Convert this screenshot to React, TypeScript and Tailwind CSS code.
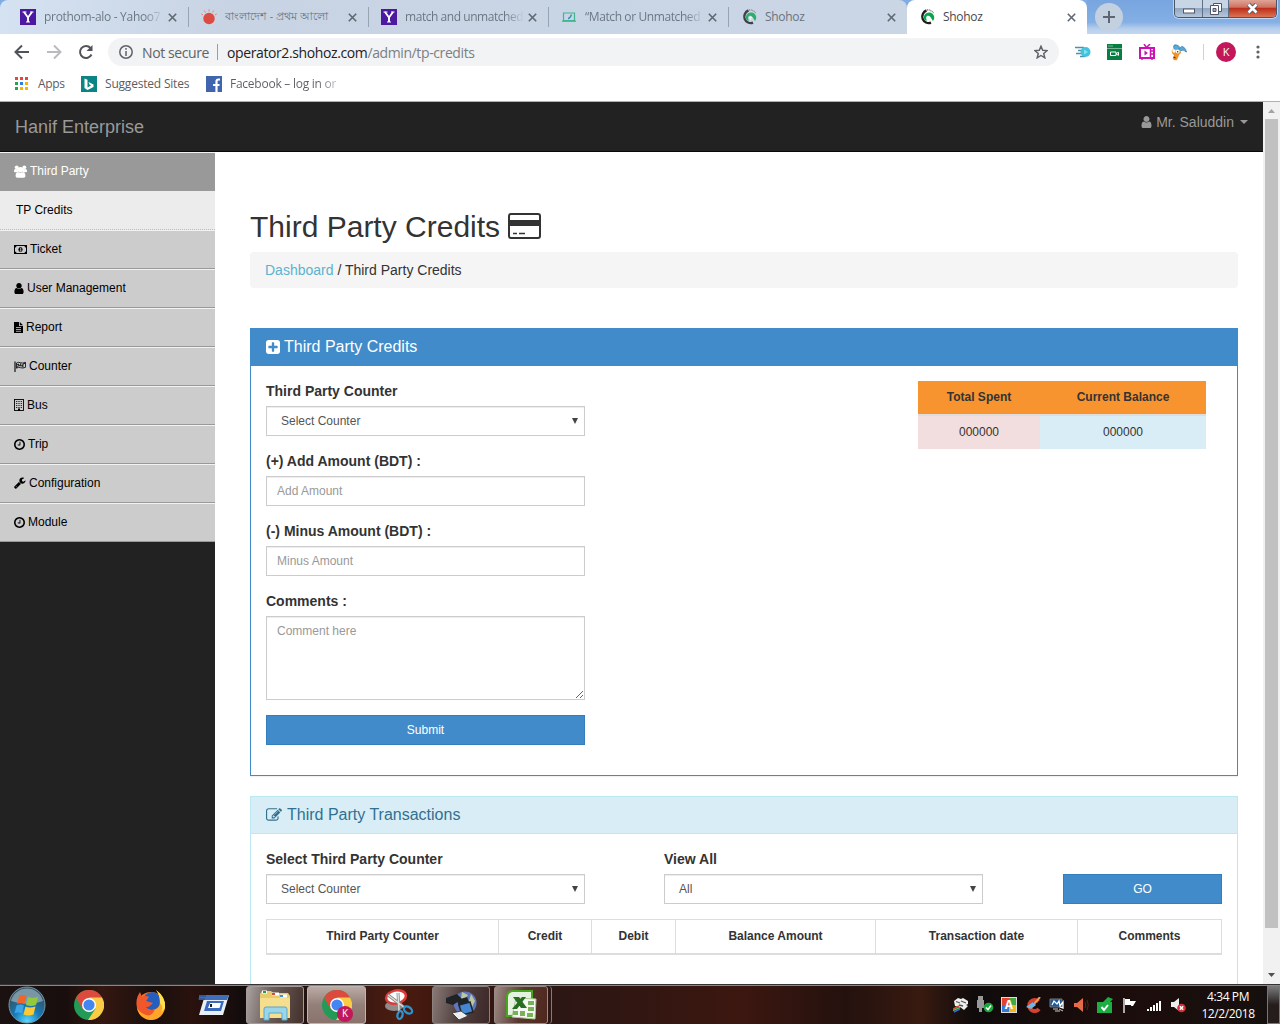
import React from "react";

const P = {
  user: "M1536 1399q0 109-62.5 187t-150.5 78h-854q-88 0-150.5-78t-62.5-187q0-85 8.5-160.5t31.5-152 58.5-131 94-89 134.5-34.5q131 128 313 128t313-128q76 0 134.5 34.5t94 89 58.5 131 31.5 152 8.5 160.5zm-256-887q0 159-112.5 271.5t-271.5 112.5-271.5-112.5-112.5-271.5 112.5-271.5 271.5-112.5 271.5 112.5 112.5 271.5z",
  plus: "M1408 960v-128q0-26-19-45t-45-19h-320v-320q0-26-19-45t-45-19h-128q-26 0-45 19t-19 45v320h-320q-26 0-45 19t-19 45v128q0 26 19 45t45 19h320v320q0 26 19 45t45 19h128q26 0 45-19t19-45v-320h320q26 0 45-19t19-45zm256-544v960q0 119-84.5 203.5t-203.5 84.5h-960q-119 0-203.5-84.5t-84.5-203.5v-960q0-119 84.5-203.5t203.5-84.5h960q119 0 203.5 84.5t84.5 203.5z",
  clock: "M1024 544v448q0 14-9 23t-23 9h-320q-14 0-23-9t-9-23v-64q0-14 9-23t23-9h224v-352q0-14 9-23t23-9h64q14 0 23 9t9 23zm416 352q0-148-73-273t-198-198-273-73-273 73-198 198-73 273 73 273 198 198 273 73 273-73 198-198 73-273zm224 0q0 209-103 385.5t-279.5 279.5-385.5 103-385.5-103-279.5-279.5-103-385.5 103-385.5 279.5-279.5 385.5-103 385.5 103 279.5 279.5 103 385.5z",
  wrench: "M448 1472q0-26-19-45t-45-19-45 19-19 45 19 45 45 19 45-19 19-45zm644-420l-682 682q-37 37-90 37-52 0-91-37l-106-108q-38-36-38-90 0-53 38-91l681-681q39 98 114.5 173.5t173.5 114.5zm634-435q0 39-23 106-47 134-164.5 217.5t-258.5 83.5q-185 0-316.5-131.5t-131.5-316.5 131.5-316.5 316.5-131.5q58 0 121.5 16.5t107.5 46.5q16 11 16 28t-16 28l-293 169v224l193 107q5-3 79-48.5t135.5-81 70.5-35.5q15 0 23.5 10t8.5 25z",
  edit: "M888 1184l116-116-152-152-116 116v56h96v96h56zm440-720q-16-16-33 1l-350 350q-17 17-1 33t33-1l350-350q17-17 1-33zm80 594v190q0 119-84.5 203.5t-203.5 84.5h-832q-119 0-203.5-84.5t-84.5-203.5v-832q0-119 84.5-203.5t203.5-84.5h832q63 0 117 25 15 7 18 23 3 17-9 29l-49 49q-14 14-32 8-23-6-45-6h-832q-66 0-113 47t-47 113v832q0 66 47 113t113 47h832q66 0 113-47t47-113v-126q0-13 9-22l64-64q15-15 35-7t20 29zm-96-738l288 288-672 672h-288v-288zm444 132l-92 92-288-288 92-92q28-28 68-28t68 28l152 152q28 28 28 68t-28 68z",
};

const UsersIcon = () => (
  <svg width="13" height="13" viewBox="0 0 13 13" fill="currentColor">
    <circle cx="2.7" cy="2.3" r="1.9" /><circle cx="10.3" cy="2.3" r="1.9" />
    <path d="M0 6.300c0-1.600.6-2.500 1.600-2.300.8.400 1.900.300 2.600-.2L4 7.200H1C.4 7.200 0 7 0 6.300zM13 6.300c0-1.600-.6-2.500-1.600-2.300-.8.400-1.900.300-2.600-.2L9 7.200h3c.6 0 1-.2 1-.9z" />
    <circle cx="6.5" cy="4.800" r="2.800" />
    <path d="M4 7c1.400 1.200 3.600 1.200 5 0 1.700.2 2.400 1.700 2.400 3.700 0 1.300-.6 2-1.700 2H3.300c-1.100 0-1.700-.7-1.700-2C1.600 8.700 2.300 7.200 4 7z" />
  </svg>
);
const MoneyIcon = () => (
  <svg width="13" height="9" viewBox="0 0 13 9" fill="none" stroke="currentColor">
    <rect x=".5" y=".5" width="12" height="8" />
    <path d="M1 2.500q1.300 0 1.500-1.500H1zM12 2.500q-1.300 0-1.500-1.500H12zM1 6.500q1.300 0 1.500 1.500H1zM12 6.500q-1.300 0-1.500 1.500H12z" fill="currentColor" stroke="none" />
    <ellipse cx="6.5" cy="4.500" rx="2.100" ry="2.600" fill="currentColor" stroke="none" />
    <path d="M6 3.500l.7-.5v3M5.700 6h1.800" stroke="#ccc" strokeWidth=".8" />
  </svg>
);
const FileIcon = () => (
  <svg width="9" height="11" viewBox="0 0 9 11" fill="currentColor">
    <path d="M0 0h5v4h4v7H0z" /><path d="M5.800 0L9 3.200H5.800z" />
    <path d="M2 5.500h5M2 7.500h5M2 9.300h5" stroke="#ccc" strokeWidth=".8" />
  </svg>
);
const FlagIcon = () => (
  <svg width="12" height="11" viewBox="0 0 12 11" fill="none" stroke="currentColor">
    <path d="M1 .5v10.500" strokeWidth="1.100" />
    <path d="M2.500 2q2-1.200 4-.3t5-.4v5q-3 1.300-5 .4t-4 .5z" strokeWidth=".8" />
    <path d="M3 4l1.700-1V4.600l2 .2M6.700 2.300v2.400l2.200.3V3l2-.6M3 6.300l1.700-1.500M8.900 5v1.500" strokeWidth=".9" />
  </svg>
);
const BuildingIcon = () => (
  <svg width="10" height="12" viewBox="0 0 10 12" fill="none" stroke="currentColor">
    <rect x=".5" y=".5" width="9" height="11" strokeWidth=".9" />
    <path d="M2 2.500h6M2 4.500h6M2 6.500h6M2 8.500h6" strokeWidth=".8" strokeDasharray="1 .67" />
    <path d="M5 9.500V12" strokeWidth="2" />
  </svg>
);

function Fa({ d, w, h, box }: { d: string; w: number; h: number; box: string }) {
  return (
    <svg width={w} height={h} viewBox={box} fill="currentColor">
      <path d={d} />
    </svg>
  );
}

const Close = () => (
  <svg width="9" height="9" viewBox="0 0 9 9" stroke="#5f6872" strokeWidth="1.600" className="shrink-0">
    <path d="M.8.800l7.400 7.400M8.200.800L.8 8.200" />
  </svg>
);
const Yahoo = () => (
  <span className="flex h-4 w-4 shrink-0 items-center justify-center bg-[#4b1aa0]">
    <svg width="12" height="12" viewBox="0 0 12 12" fill="none" stroke="white">
      <path d="M2 1l4 5.500L10 1M6 6v5" strokeWidth="1.900" /><path d="M.5 1h4M8 1h3.500M4 11h4" strokeWidth="1.200" />
    </svg>
  </span>
);
const SunIcon = () => (
  <svg width="16" height="16" viewBox="0 0 16 16" className="shrink-0">
    <circle cx="8" cy="9.500" r="5.700" fill="#dc4b41" />
    <path d="M8 2.500V.3M4.500 3.500L3.300 1.500M11.500 3.500l1.200-2M2 6L.2 4.800M14 6l1.800-1.200" stroke="#e58379" strokeWidth="1" />
  </svg>
);
const Laptop = () => (
  <svg width="16" height="16" viewBox="0 0 16 16" fill="none" className="shrink-0">
    <path d="M2.500 4h11v7.500h-11z" stroke="#3fb68b" strokeWidth="1.200" />
    <path d="M1 12.200h14" stroke="#3fb68b" strokeWidth="1.300" /><path d="M7 9.500q2 0 3.500-4" stroke="#3a86bb" strokeWidth="1.300" />
  </svg>
);
const Shohoz = ({ dim = false }: { dim?: boolean }) => (
  <svg width="16" height="16" viewBox="0 0 16 16" fill="none" className={dim ? "shrink-0 opacity-80" : "shrink-0"}>
    <path d="M7.500 1.500A6.500 6.500 0 1 0 12 13.700" stroke="#211c21" strokeWidth="2.400" />
    <path d="M8 1q4-.4 6.500 3" stroke="#777" strokeWidth="1.300" strokeDasharray="1 .7" />
    <path d="M14 12A5.200 5.200 0 1 0 5 10q1 1.500 3 1.800Q6 8 8.500 6.800q1.500-.4 2.600 1T14 12z" fill="#08a54c" />
    <path d="M8 9q.3-2 2-1.500t2 3Q11 8.500 10 9.300t1 1.700Q8.500 11 8 9z" fill="#fff" />
  </svg>
);

function Tab({ icon, title, w, text }: { icon: React.ReactNode; title: string; w: string; text: string }) {
  return (
    <div className={`flex h-[34px] shrink-0 items-center pl-3 pr-[11px] ${w}`}>
      {icon}
      <span className={`ml-2 flex-1 whitespace-nowrap text-[#68737f] ${text}`}>{title}</span>
      <Close />
    </div>
  );
}
const Divider = () => <span className="h-5 w-px shrink-0 bg-[#98a4b3]" />;
const fade = "bg-[linear-gradient(to_right,#68737f_100px,#68737f20_117px)] bg-clip-text text-transparent";

function Browser() {
  return (
    <header className="shrink-0 font-['Open_Sans','Noto_Sans',sans-serif]">
      <div className="relative flex h-[34px] items-center bg-[linear-gradient(90deg,#80abe2,#7facE3_86%,#88b4e8)]">
        <div className="flex h-full w-[907px] items-center rounded-t-lg bg-[linear-gradient(100deg,#d5e2f2,#c8d4e4_25%,#c8d5e5_60%,#cbd6e5)] pl-2">
          <Tab icon={<Yahoo />} title="prothom-alo - Yahoo7" w="w-[180px]" text={`text-[12px] tracking-[-0.300px] ${fade}`} />
          <Divider />
          <Tab icon={<SunIcon />} title="বাংলাদেশ - প্রথম আলো" w="w-[179px]" text="text-[10.500px]" />
          <Divider />
          <Tab icon={<Yahoo />} title="match and unmatched" w="w-[179px]" text={`text-[12px] tracking-[-0.450px] ${fade}`} />
          <Divider />
          <Tab icon={<Laptop />} title="“Match or Unmatched" w="w-[179px]" text={`text-[12px] tracking-[-0.400px] ${fade}`} />
          <Divider />
          <Tab icon={<Shohoz dim />} title="Shohoz" w="w-[178px]" text="text-[12px] tracking-[-0.300px]" />
        </div>
        <div className="flex h-[34px] w-[180px] items-center rounded-t-lg bg-white pl-3 pr-[11px]">
          <Shohoz />
          <span className="ml-2 flex-1 text-[12px] tracking-[-0.300px] text-[#45494d]">Shohoz</span>
          <Close />
        </div>
        <div className="flex h-full flex-1 items-center bg-[linear-gradient(#78a5df,#84afe5_65%,#b8cfec_85%,#c4d6ee)]">
          <span className="ml-2 flex h-7 w-7 items-center justify-center rounded-full bg-[#c3d0df]">
            <svg width="12" height="12" viewBox="0 0 12 12" stroke="#5b6670" strokeWidth="2"><path d="M6 0v12M0 6h12" /></svg>
          </span>
        </div>
        <div className="absolute right-[3px] top-0 flex h-[18px] w-[103px] overflow-hidden rounded-b-[5px] border border-t-0 border-[#4b5564] shadow-[0_0_0_1px_#ffffff80]">
          <span className="flex w-[28px] items-center justify-center border-r border-[#5f6f85] bg-[linear-gradient(#c8d5e4_45%,#92a8c2_50%,#b5c6da)]">
            <svg width="14" height="6" viewBox="0 0 14 6" className="mt-1"><rect x="1.500" y="1" width="11" height="4" fill="#fff" stroke="#535666" /></svg>
          </span>
          <span className="flex w-[26px] items-center justify-center border-r border-[#5f6f85] bg-[linear-gradient(#c8d5e4_45%,#92a8c2_50%,#b5c6da)]">
            <svg width="12" height="12" viewBox="0 0 12 12" fill="#fff" stroke="#535666"><path d="M3.500.500h8v8h-8z" /><path d="M.5 2.500h8v9h-8z" /><path d="M3 5.500h3v3H3z" fill="#9fb1c8" /></svg>
          </span>
          <span className="flex flex-1 items-center justify-center bg-[linear-gradient(#dfa497,#cf7360_42%,#bd3019_50%,#dd7355)]">
            <svg width="13" height="11" viewBox="0 0 13 11" fill="none"><path d="M2.500 1.500l8 8M10.500 1.500l-8 8" stroke="#535666" strokeWidth="4.500" /><path d="M2.500 1.500l8 8M10.500 1.500l-8 8" stroke="#fff" strokeWidth="2.600" /></svg>
          </span>
        </div>
      </div>
      <div className="flex h-9 items-center bg-white pl-[14px] text-[14px]">
        <svg width="16" height="16" viewBox="0 0 16 16" fill="none" stroke="#50545a" strokeWidth="2"><path d="M15 8H2M8 1.500L1.500 8 8 14.500" /></svg>
        <svg width="16" height="16" viewBox="0 0 16 16" fill="none" stroke="#b9bbbe" strokeWidth="2" className="ml-4"><path d="M1 8h13M8 1.500L14.500 8 8 14.500" /></svg>
        <svg width="16" height="16" viewBox="0 0 16 16" fill="none" stroke="#50545a" strokeWidth="2" className="ml-4"><path d="M13.500 10.500A6 6 0 1 1 12.500 4" /><path d="M14.500 1v6h-6z" fill="#50545a" stroke="none" /></svg>
        <div className="ml-[14px] flex h-7 w-[951px] items-center rounded-full bg-[#f1f3f4] pl-[11px] pr-[11px]">
          <svg width="14" height="14" viewBox="0 0 14 14" fill="none" stroke="#5f6368" strokeWidth="1.500"><circle cx="7" cy="7" r="6.200" /><path d="M7 6v5M7 3v1.700" /></svg>
          <span className="ml-[9px] w-[68px] whitespace-nowrap text-[14px] tracking-[-0.400px] text-[#5f6368]">Not secure</span>
          <span className="ml-[7px] h-4 w-px bg-[#9a9da1]" />
          <span className="ml-[9px] flex-1 whitespace-nowrap text-[14px] tracking-[-0.390px] text-[#7b7f84]"><span className="text-[#222]">operator2.shohoz.com</span>/admin/tp-credits</span>
          <svg width="14" height="14" viewBox="0 0 24 24" fill="none" stroke="#5f6368" strokeWidth="2.500"><path d="M12 2l2.900 7 7.600.6-5.800 5 1.800 7.400-6.500-4-6.500 4 1.800-7.400-5.800-5L9.100 9z" /></svg>
        </div>
        <svg width="16" height="14" viewBox="0 0 16 14" className="ml-4"><path d="M0 2.500h9M3 5.500h6M1 8.500h7M5 11.500h5" stroke="#4c91a8" strokeWidth="1.300" /><circle cx="10.500" cy="7" r="5" fill="#42c3de" /><path d="M9 4.500l4 2.500-4 2.500z" fill="#89e1f1" /></svg>
        <svg width="16" height="16" viewBox="0 0 16 16" className="ml-4"><path d="M0 0h15v16H0z" fill="#087e43" /><path d="M1 2h5M0 4.500h15" stroke="#77b795" /><path d="M3.500 8h5.500v3.500H3.500zM9.500 9.300l2-1v3l-2-1z" stroke="#fff" fill="none" /></svg>
        <svg width="16" height="17" viewBox="0 0 16 17" className="ml-4" fill="none" stroke="#cc12b4"><path d="M5 0l2.500 3.500L11 0M3 16v-2M13 16v-2" strokeWidth="1.500" /><rect x="1" y="4" width="14" height="10" strokeWidth="2" /><path d="M11.500 4v10M12 7h3M12 10h3" strokeWidth="1.500" /><path d="M5.500 6.500L9 9l-3.500 2.500z" fill="#cc12b4" stroke="none" /></svg>
        <svg width="16" height="17" viewBox="0 0 16 17" className="ml-4"><path d="M3.500 6Q1 0 5.500 1T7.500 6M8 6q2-5 4.500-3T15.500 8Q12 4.500 9 7" fill="#5aaad8" stroke="#2c7cae" strokeWidth=".8" /><path d="M1 6q3-2 7 0t0 5l-2 5q-3 1-4-1l1-4q-3-2-2-5z" fill="#f29125" /><circle cx="3" cy="7" r="1.700" fill="#fff" /><circle cx="6.700" cy="7.500" r="1.900" fill="#fff" /><path d="M6.700 7v1.500M2.500 13l2 1" stroke="#333" strokeWidth="1.100" /></svg>
        <span className="ml-4 h-4 w-px bg-[#cfd1d4]" />
        <span className="ml-3 flex h-5 w-5 items-center justify-center rounded-full bg-[#c2185b] text-[11px] text-white">K</span>
        <svg width="4" height="14" viewBox="0 0 4 14" className="ml-[20px]" fill="#5f6368"><circle cx="2" cy="2" r="1.600" /><circle cx="2" cy="7" r="1.600" /><circle cx="2" cy="12" r="1.600" /></svg>
      </div>
      <div className="flex h-8 items-center border-b border-[#b1b1b1] bg-white pb-1 pl-[15px] text-[12px] text-[#5a5e63]">
        <svg width="13" height="13" viewBox="0 0 13 13"><path d="M0 0h3v3H0zM5 0h3v3H5zM10 0h3v3h-3z" fill="#e8453c" /><path d="M0 5h3v3H0zM0 10h3v3H0z" fill="#23a455" /><path d="M5 5h3v3H5z" fill="#2f7de1" /><path d="M10 5h3v3h-3zM5 10h3v3H5zM10 10h3v3h-3z" fill="#f4b400" /></svg>
        <span className="ml-[10px] w-[27px] tracking-[-0.300px]">Apps</span>
        <svg width="16" height="16" viewBox="0 0 16 16" className="ml-4"><path d="M0 0h16v16H0z" fill="#0c8484" /><path d="M3.500 2.500v9.500l3 2 6-3V8.500L7.500 6l1 2.500 1.500 1-3.500 2V3.800z" fill="#fff" /></svg>
        <span className="ml-2 w-[85px] whitespace-nowrap tracking-[-0.200px]">Suggested Sites</span>
        <svg width="16" height="16" viewBox="0 0 16 16" className="ml-4"><path d="M0 0h16v16H0z" fill="#4064ad" /><path d="M14 3.500h-1.500q-2 0-2 2V16M7 9h6.500" stroke="#fff" strokeWidth="2.200" fill="none" /></svg>
        <span className="ml-2 whitespace-nowrap bg-[linear-gradient(to_right,#5a5e63_88px,#5a5e6310_115px)] bg-clip-text tracking-[-0.250px] text-transparent">Facebook – log in or</span>
      </div>
    </header>
  );
}

const menu: [string, React.ReactNode][] = [
  ["Ticket", <MoneyIcon />],
  ["User Management", <Fa d={P.user} w={10} h={11} box="256 128 1280 1536" />],
  ["Report", <FileIcon />],
  ["Counter", <FlagIcon />],
  ["Bus", <BuildingIcon />],
  ["Trip", <Fa d={P.clock} w={11} h={11} box="128 128 1536 1536" />],
  ["Configuration", <Fa d={P.wrench} w={12} h={12} box="64 64 1728 1728" />],
  ["Module", <Fa d={P.clock} w={11} h={11} box="128 128 1536 1536" />],
];

function Sidebar() {
  return (
    <aside className="w-[215px] shrink-0 bg-[#222] text-[12px] text-black">
      <div className="flex h-[39px] items-center gap-[3px] border-t border-[#f2f2f2] bg-[#999] pb-[2px] pl-[14px] text-white"><UsersIcon />Third Party</div>
      <div className="flex h-[39px] items-center border-b border-dotted border-[#bbb] bg-[#ececec] pl-4">TP Credits</div>
      {menu.map(([name, icon]) => (
        <div key={name} className="flex h-[39px] items-center gap-[3px] border-b border-t border-b-[#999] border-t-[#f2f2f2] bg-[#ccc] pb-px pl-[14px]">{icon}{name}</div>
      ))}
    </aside>
  );
}

function Select({ text }: { text: string }) {
  return (
    <div className="flex h-[30px] w-[319px] items-center justify-between border border-[#ccc] pl-[14px] pr-[6px] text-[12px] text-[#555] shadow-[inset_0_1px_1px_#00000013]">
      {text}
      <svg width="6" height="6" viewBox="0 0 6 6" fill="#444"><path d="M0 0h6L3 6z" /></svg>
    </div>
  );
}
const Label = ({ children }: { children: React.ReactNode }) => (
  <div className="mb-[5px] h-5 whitespace-nowrap text-[14px] font-bold leading-5">{children}</div>
);
const inputCls = "block w-[319px] border border-[#ccc] px-[10px] text-[12px] placeholder:text-[#999] shadow-[inset_0_1px_1px_#00000013]";

function Content() {
  return (
    <main className="w-[1048px] pl-[35px] pt-[52px] text-[#333]">
      <h1 className="flex h-[44px] items-center text-[30px]">
        Third Party Credits
        <svg width="33" height="26" viewBox="0 0 33 26" className="ml-[8px]" fill="none" stroke="#333"><rect x="1" y="1" width="31" height="24" rx="2" strokeWidth="2" /><path d="M1 10h31" strokeWidth="6" /><path d="M5 20.500h4M11 20.500h6" strokeWidth="1.500" /></svg>
      </h1>
      <nav className="mt-1 flex h-9 w-[988px] items-center whitespace-pre rounded bg-[#f5f5f5] pl-[15px] text-[14px]"><span className="text-[#5bb3d0]">Dashboard</span> / Third Party Credits</nav>

      <section className="mt-10 h-[448px] w-[988px] border border-[#428bca] shadow-[0_1px_1px_#0000000d]">
        <h2 className="flex h-[37px] items-center gap-1 bg-[#428bca] pb-[2px] pl-[15px] text-[16px] text-white"><Fa d={P.plus} w={14} h={14} box="128 128 1536 1536" />Third Party Credits</h2>
        <div className="flex justify-between pl-[15px] pr-[31px] pt-[15px]">
          <form className="w-[319px]">
            <Label>Third Party Counter</Label>
            <Select text="Select Counter" />
            <div className="h-[15px]" />
            <Label>(+) Add Amount (BDT) :</Label>
            <input className={`${inputCls} h-[30px]`} placeholder="Add Amount" />
            <div className="h-[15px]" />
            <Label>(-) Minus Amount (BDT) :</Label>
            <input className={`${inputCls} h-[30px]`} placeholder="Minus Amount" />
            <div className="h-[15px]" />
            <Label>Comments :</Label>
            <textarea className={`${inputCls} h-[84px] resize pt-[5px]`} placeholder="Comment here" />
            <button type="button" className="mt-[15px] h-[30px] w-full border border-[#357ebd] bg-[#428bca] text-[12px] text-white">Submit</button>
          </form>
          <div className="grid h-[68px] w-[288px] grid-cols-[122px_166px] grid-rows-[33px_35px] text-center text-[12px]">
            <span className="bg-[#f89430] pt-[7px] font-bold">Total Spent</span>
            <span className="bg-[#f89430] pt-[7px] font-bold">Current Balance</span>
            <span className="border-t-2 border-[#ddd] bg-[#f2dede] pt-[7px]">000000</span>
            <span className="border-t-2 border-[#ddd] bg-[#d9edf7] pt-[7px]">000000</span>
          </div>
        </div>
      </section>

      <section className="mt-5 h-[240px] w-[988px] border border-[#bce8f1]">
        <h2 className="flex h-[37px] items-center gap-[5px] border-b border-[#bce8f1] bg-[#d9edf7] pl-[15px] text-[16px] text-[#31708f]"><Fa d={P.edit} w={16} h={14} box="0 128 1792 1536" />Third Party Transactions</h2>
        <div className="px-[15px] pt-[15px]">
          <div className="flex items-end">
            <div><Label>Select Third Party Counter</Label><Select text="Select Counter" /></div>
            <div className="ml-[79px]"><Label>View All</Label><Select text="All" /></div>
            <button type="button" className="ml-auto h-[30px] w-[159px] border border-[#357ebd] bg-[#428bca] text-[12px] text-white">GO</button>
          </div>
          <div className="mt-[15px] grid h-[36px] grid-cols-[232px_93px_84px_200px_202px_143px] border border-b-2 border-[#ddd] text-center text-[12px] font-bold leading-[32px]">
            {["Third Party Counter", "Credit", "Debit", "Balance Amount", "Transaction date", "Comments"].map((t) => (
              <span key={t} className="border-r border-[#ddd] last:border-r-0">{t}</span>
            ))}
          </div>
        </div>
      </section>
    </main>
  );
}

const ChromeLogo = () => (
  <svg width="30" height="30" viewBox="0 0 30 30">
    <circle cx="15" cy="15" r="15" fill="#239b56" />
    <path d="M2 7.500A15 15 0 0 1 28 7.500H15L8.500 18.800z" fill="#dc4a3e" />
    <path d="M28 7.500A15 15 0 0 1 14 30l7.500-11.200L15 7.500z" fill="#fccb45" />
    <circle cx="15" cy="15" r="7" fill="#fff" /><circle cx="15" cy="15" r="5.600" fill="#4385f3" />
  </svg>
);
const slot = "flex h-[38px] shrink-0 items-center justify-center rounded-[3px] border";

function Taskbar() {
  return (
    <footer className="flex h-10 shrink-0 items-center border-t border-[#333] bg-[linear-gradient(90deg,#1a1110,#170e0d_5%,#351710_8%,#180f0e_12%,#2a120d_15%,#120c0c_19%,#2a1513_26%,#4c1c10_31%,#3a160e_35%,#2c1715_43%,#301612_48%,#3c1710_58%,#24110e_66%,#381a10_72%,#100b0b_76%,#1c0d0b_88%,#14100f)] shadow-[inset_0_1px_0_#888] font-['Open_Sans',sans-serif]">
      <svg width="38" height="38" viewBox="0 0 38 38" className="ml-2">
        <defs><radialGradient id="orb" cy=".95" r=".75"><stop stopColor="#59d9ff" /><stop offset=".5" stopColor="#167ab6" /><stop offset="1" stopColor="#315468" /></radialGradient></defs>
        <circle cx="19" cy="19" r="18" fill="url(#orb)" stroke="#7497a8" /><path d="M3 15a16.500 16.500 0 0 1 32 0q-15 6-32 0z" fill="#c4d8e0" opacity=".5" />
        <path d="M11 10q3.500-2 7.500 0l-2 8q-4-2-7.500 0z" fill="#f06529" /><path d="M20 11q4 2 10 0l-2 8q-5 2-10 0z" fill="#94c83d" /><path d="M8.500 19.500q4-2 7.500 0l-2 8q-4-2-7.500 0z" fill="#3ba5e8" /><path d="M17.500 20.500q4 2 10 0l-2 8q-5 2-10 0z" fill="#ffc933" />
      </svg>
      <span className="ml-7"><ChromeLogo /></span>
      <svg width="32" height="32" viewBox="0 0 32 32" className="ml-[31px]">
        <circle cx="16" cy="17" r="14" fill="#fb6d16" /><circle cx="17" cy="12" r="9" fill="#245fc0" /><path d="M21 1q10 7 9 18-3 12-15 12Q4 29 2 19q8 8 16 2 7-1 7-9 0-6-4-11z" fill="#ffa527" /><path d="M2 19Q0 10 5 3l2 5q4-2 7 0l-3 4 7 2q-4 5-8 4 4 5 10 2-3 8-9 6-6-2-9-7z" fill="#f0582b" /><path d="M21 1q10 7 9 18l-4 5q3-6-1-10 0-8-4-13z" fill="#ffe34e" />
      </svg>
      <svg width="32" height="24" viewBox="0 0 32 24" className="ml-[31px]"><path d="M7 2h24l-6 20H1z" fill="#e9eff7" /><path d="M1 2h30l-2 5H1z" fill="#3f6fb8" /><path d="M1 3h7M0 6h7" stroke="#24457f" /><path d="M9 8h17l-3 10H6z" fill="#386bc0" /><path d="M12 10h11l-1.500 5H10z" fill="#fff" /><path d="M13 11v3" stroke="#222" strokeWidth="2" /></svg>
      <span className={`${slot} ml-4 w-[58px] border-[#a59b98] bg-[linear-gradient(100deg,#a8a2a0,#6d5f5b_40%,#43302b)]`}>
        <svg width="34" height="32" viewBox="0 0 34 32"><path d="M2 5l2-3h9l2 2h15l2 3v22H2z" fill="#e6ca6c" /><path d="M4 3h5M14 5h7M22 7h7" stroke="#fff" strokeWidth="3" /><path d="M5 3h3" stroke="#20a03b" strokeWidth="2" /><path d="M14 5h3" stroke="#d24c32" strokeWidth="2" /><path d="M22 7h3" stroke="#3294d5" strokeWidth="2" /><path d="M2 9h30v20H2z" fill="#f5df8e" /><path d="M6 31V20q0-2 2-2h19q2 0 2 2v11h-5v-7H11v7z" fill="#9bd5ea" stroke="#5da7c7" /></svg>
      </span>
      <span className={`${slot} relative ml-[3px] w-[59px] border-[#c1b4b0] bg-[linear-gradient(#baaaa5,#937f79_50%,#8a736c)]`}>
        <ChromeLogo />
        <span className="absolute bottom-[1px] right-[12px] flex h-4 w-4 items-center justify-center rounded-full bg-[#c2185b] text-[10px] text-white">K</span>
      </span>
      <svg width="32" height="32" viewBox="0 0 32 32" className="ml-[17px]" fill="none"><ellipse cx="11" cy="17" rx="9" ry="5" fill="#928b8b" /><ellipse cx="13" cy="8" rx="10" ry="6.500" fill="#fff" stroke="#db3c3b" strokeWidth="2.500" transform="rotate(-12 13 8)" /><path d="M5 6l17 13M15 4l1 18" stroke="#888" strokeWidth="3" /><path d="M5 6l17 13M15 4l1 18" stroke="#ddd" strokeWidth="1.500" /><ellipse cx="25" cy="21" rx="4.500" ry="3" stroke="#2b94d2" strokeWidth="2.300" transform="rotate(35 25 21)" /><ellipse cx="17" cy="26" rx="2.500" ry="4" stroke="#2b94d2" strokeWidth="2.300" transform="rotate(15 17 26)" /></svg>
      <span className={`${slot} ml-[17px] w-[58px] border-[#8d817e] bg-[linear-gradient(100deg,#897976,#524240_45%,#3c2826)]`}>
        <svg width="32" height="32" viewBox="0 0 32 32"><circle cx="20" cy="14" r="11.500" fill="#6274bb" /><path d="M17 3l6 3-3 4 5 3-2 6-8-3zM26 5l4 7-3 6-3-6z" fill="#b8c9a0" /><path d="M1 9l11-4 5 5-9 6-7-2zM12 11l10-3 2 5-10 5z" fill="#202326" /><path d="M14 16l11-3 3 10-11 3z" fill="#4386d1" stroke="#20242b" strokeWidth="1.500" /><path d="M7 24l9-2 7 5-9 4z" fill="#eee" stroke="#444" /></svg>
      </span>
      <span className={`${slot} ml-1 w-[54px] border-[#9a8a86] bg-[linear-gradient(100deg,#9d8b85,#573831_50%,#50261c)]`}>
        <svg width="32" height="32" viewBox="0 0 32 32"><path d="M2 27V8q0-5 5-6h20v24z" fill="#e4f2df" stroke="#45a81c" strokeWidth="2" /><path d="M11 9l20 1-1 20-23-2z" fill="#f5f8f2" stroke="#aac995" /><path d="M8 8h6l8 11h-6zM17 8h4L12 20H7z" fill="#296d22" /><path d="M23 12h6v4h-6zM23 18h6v4h-6zM22 24h6v4h-6zM15 22h5v5h-5zM8 22h5v4H8z" fill="#79b05a" /></svg>
      </span>
      <span className="h-[38px] w-1 rounded-r border-r border-[#8d7974]" />
      <div className="ml-auto mr-[9px] flex items-center gap-2">
        <svg width="16" height="16" viewBox="0 0 16 16"><path d="M1 4l4-3 3 1 2-1 5 3v3l-2 1 2 1-4 4-4-3-5-1z" fill="#eee" /><path d="M3 4.500l4 1.500M8 4l5 2M6 8l4 1" stroke="#555" strokeWidth="1.300" /><path d="M0 12l6-3" stroke="#e34b36" strokeWidth="1.500" /><path d="M0 13.500l7-3" stroke="#46c94f" strokeWidth="1.500" /><path d="M1 15l6-3" stroke="#3c62e0" strokeWidth="1.500" /></svg>
        <svg width="17" height="17" viewBox="0 0 17 17"><path d="M1 0h5v4H1zM0 4h7v8H5v4H2v-4H0z" fill="#999" /><circle cx="11.500" cy="11.500" r="4.800" fill="#18a83a" /><path d="M9 11.500l2 2 3-4" stroke="#fff" strokeWidth="1.600" fill="none" /></svg>
        <span className="-ml-px flex h-4 w-4 items-center justify-center border border-[#ddd] bg-[conic-gradient(#43a844_25%,#f3b51c_0_50%,#327cd3_0_75%,#e2432e_0)] text-[12px] font-bold text-white">A</span>
        <svg width="16" height="16" viewBox="0 0 16 16"><path d="M13.500 4.500A5.500 5.500 0 1 0 14 12" stroke="#d7422e" strokeWidth="4" fill="none" /><path d="M15 0L9 7" stroke="#e89b5c" strokeWidth="2" /><path d="M8 5l3 3-5 4-5-2z" fill="#72b5e5" /></svg>
        <svg width="16" height="16" viewBox="0 0 16 16"><path d="M1 2h12v8H1z" fill="#1c5994" stroke="#777" /><path d="M3 8l2-4 3 3 2-3 1 5 3-4v6l-3-1" stroke="#fff" fill="none" strokeWidth="1.300" /><path d="M4 12h5M6 14h5M10 12l4 2" stroke="#ccc" /></svg>
        <svg width="16" height="16" viewBox="0 0 16 16"><path d="M1 6h3l6-5v14l-6-5H1z" fill="#e56a49" /><path d="M12 5q1.500 3 0 6M14 3q2.500 5 0 10" stroke="#5a2118" fill="none" /></svg>
        <svg width="17" height="16" viewBox="0 0 17 16"><path d="M0 5h6l5-5 5 2-3 3h2v11H0z" fill="#1ead43" /><path d="M4.500 10l2.500 3 4-5" stroke="#fff" strokeWidth="2" fill="none" /></svg>
        <svg width="16" height="16" viewBox="0 0 16 16"><path d="M2 1v15" stroke="#fff" strokeWidth="1.300" /><path d="M3 2h5v2h6l-3 5H9V8H3z" fill="#fff" /></svg>
        <svg width="16" height="16" viewBox="0 0 16 16" fill="#fff"><path d="M1 12h2v2H1zM4 10h2v4H4zM7 8h2v6H7zM10 6h2v8h-2zM13 4h2v10h-2z" /></svg>
        <svg width="17" height="16" viewBox="0 0 17 16"><path d="M1 5h3l5-4v13l-5-4H1z" fill="#eee" /><circle cx="11.500" cy="11" r="4.300" fill="#d33137" /><path d="M9.800 9.300l3.400 3.400M13.200 9.300l-3.400 3.400" stroke="#fff" strokeWidth="1.500" /></svg>
        <div className="ml-[3px] w-[60px] whitespace-nowrap text-center text-[12px] leading-[17px] tracking-[-0.400px] text-white">4:34 PM<br />12/2/2018</div>
      </div>
      <span className="h-[38px] w-[13px] shrink-0 border border-[#777] bg-[linear-gradient(#777,#241d1c_50%)]" />
    </footer>
  );
}

export default function App() {
  return (
    <div className="flex h-[1024px] w-[1280px] flex-col overflow-hidden bg-white font-['Liberation_Sans',Arial,sans-serif]">
      <Browser />
      <div className="flex min-h-0 flex-1">
        <div className="flex min-h-0 w-[1263px] flex-col overflow-hidden">
          <div className="flex h-[50px] shrink-0 justify-between border-b border-[#080808] bg-[#222] pl-[15px] pr-[15px] text-[#999]">
            <span className="pt-[12px] text-[18px]">Hanif Enterprise</span>
            <span className="flex h-[40px] items-center gap-1 text-[14px]"><Fa d={P.user} w={11} h={12} box="256 128 1280 1536" />Mr. Saluddin<svg width="8" height="4" viewBox="0 0 8 4" className="ml-[2px]" fill="currentColor"><path d="M0 0h8L4 4z" /></svg></span>
          </div>
          <div className="flex min-h-0 flex-1 overflow-hidden"><Sidebar /><Content /></div>
        </div>
        <div className="flex w-[17px] flex-col items-center justify-between bg-[#f1f1f1] py-[7px]">
          <svg width="7" height="4" viewBox="0 0 7 4" fill="#a3a3a3"><path d="M0 4l3.500-4L7 4z" /></svg>
          <div className="mb-auto mt-[6px] h-[809px] w-[13px] bg-[#c1c1c1]" />
          <svg width="7" height="4" viewBox="0 0 7 4" fill="#505050"><path d="M0 0h7L3.500 4z" /></svg>
        </div>
      </div>
      <Taskbar />
    </div>
  );
}
